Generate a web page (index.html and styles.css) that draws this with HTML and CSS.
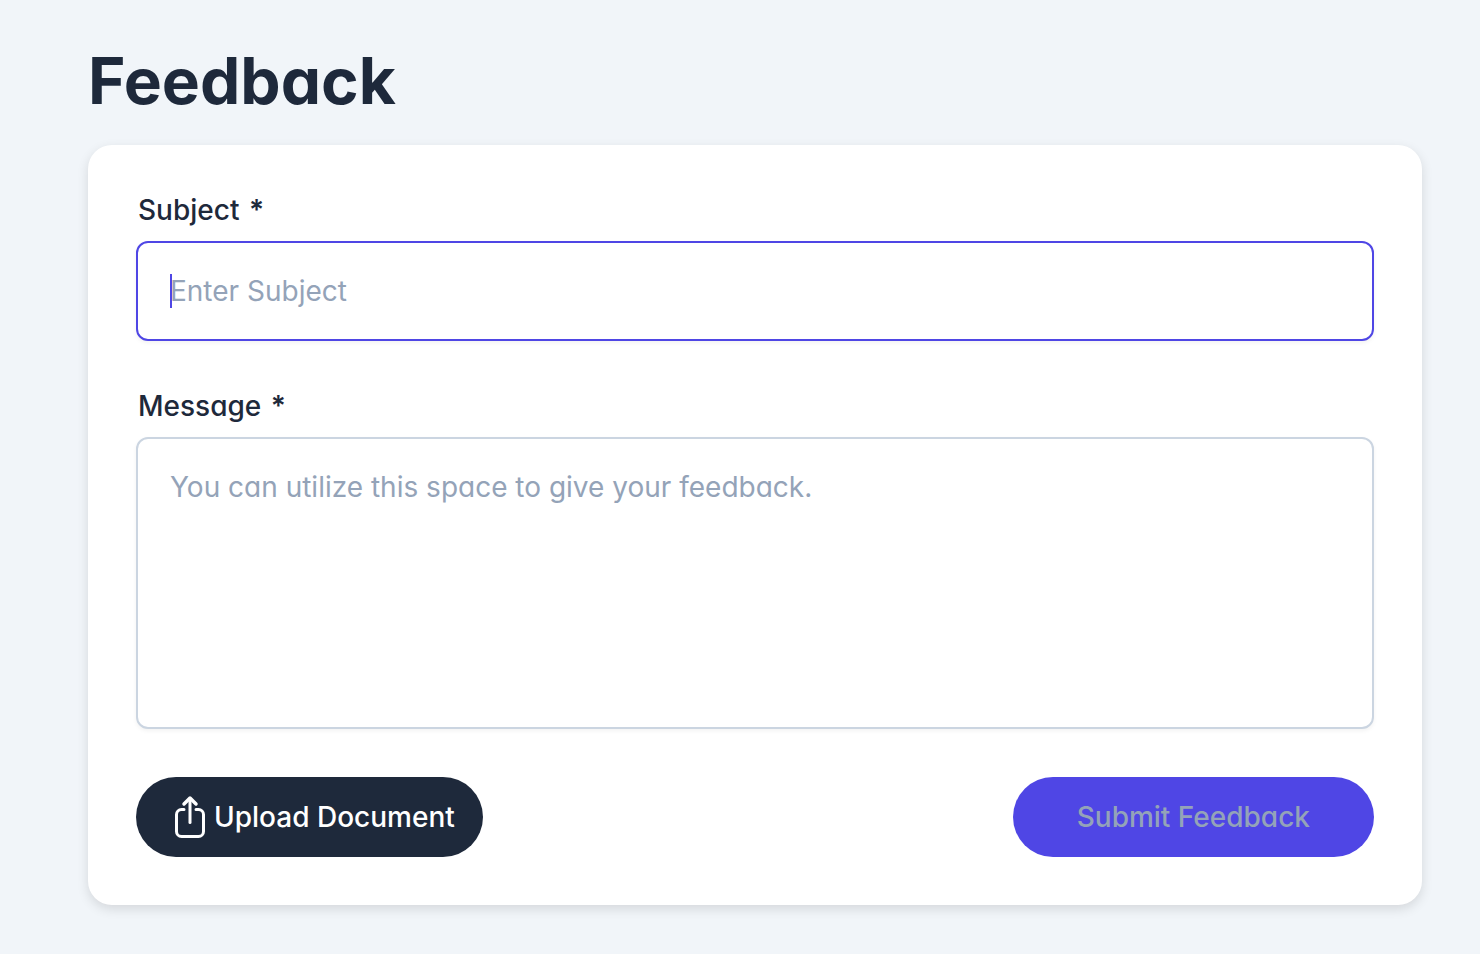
FILE: index.html
```html
<!DOCTYPE html>
<html lang="en">
<head>
<meta charset="utf-8">
<meta name="viewport" content="width=device-width, initial-scale=1">
<title>Feedback</title>
<link rel="stylesheet" href="styles.css">
</head>
<body>
<main class="page">
  <h1 class="title">Feedback</h1>
  <form class="card">
    <div class="field">
      <label class="label" for="subject">Subject <span class="required">*</span></label>
      <div class="control">
        <input class="input input-active" id="subject" type="text" placeholder="Enter Subject">
        <span class="caret" aria-hidden="true"></span>
      </div>
    </div>
    <div class="field">
      <label class="label" for="message">Message <span class="required">*</span></label>
      <textarea class="input message" id="message" placeholder="You can utilize this space to give your feedback."></textarea>
    </div>
    <div class="actions">
      <button class="button upload" type="button">
        <svg class="icon" viewBox="0 0 32 44" fill="none" stroke="currentColor" stroke-width="3" stroke-linecap="round" stroke-linejoin="round" aria-hidden="true">
          <path d="M10 14.500H7.500A5 5 0 0 0 2.500 19.500V36.500A5 5 0 0 0 7.500 41.500H24.500A5 5 0 0 0 29.500 36.500V19.500A5 5 0 0 0 24.500 14.500H22"/>
          <path d="M10 9L16 3L22 9" stroke-width="3.500"/>
          <path d="M16 4V27.500" stroke-width="3"/>
        </svg>
        <span>Upload Document</span>
      </button>
      <button class="button submit" type="submit" disabled>Submit Feedback</button>
    </div>
  </form>
</main>
</body>
</html>
```
FILE: styles.css
```css
* { box-sizing: border-box; }

body {
  margin: 0;
  min-height: 100vh;
  background: #f1f5f9;
  color: #1e293b;
  font-family: Inter, "Noto Sans", sans-serif;
  font-feature-settings: "cv11";
}

.page { padding: 48px 58px 48px 88px; }

.title {
  margin: 0 0 32px;
  font-size: 64px;
  line-height: 65px;
  font-weight: 700;
}

.card {
  display: flex;
  flex-direction: column;
  gap: 48px;
  padding: 48px;
  border-radius: 24px;
  background: #fff;
  box-shadow: 0 4px 12px rgb(0 0 0 / 12%);
}

.field { display: flex; flex-direction: column; gap: 14px; }

.label {
  padding-left: 2px;
  font-size: 28px;
  line-height: 34px;
  font-weight: 500;
}

.required { margin-left: 2px; font-weight: 600; }

.control { position: relative; }

.input {
  display: block;
  width: 100%;
  height: 100px;
  padding: 28px 32px;
  border: 2px solid #cbd5e1;
  border-radius: 12px;
  outline: none;
  background: #fff;
  color: #1e293b;
  font: 400 28px/40px Inter, "Noto Sans", sans-serif;
  font-feature-settings: "cv11";
  box-shadow: 0 2px 4px rgb(0 0 0 / 5%);
}

.input::placeholder { color: #94a3b8; opacity: 1; }

.input-active { border-color: #4f46e5; }

.message {
  height: 292px;
  resize: none;
}

.caret {
  position: absolute;
  top: 33px;
  left: 34px;
  width: 2px;
  height: 34px;
  background: #4f46e5;
}

.actions { display: flex; justify-content: space-between; }

.button {
  display: flex;
  align-items: center;
  justify-content: center;
  height: 80px;
  border: 0;
  border-radius: 40px;
  font: 500 28px/40px Inter, "Noto Sans", sans-serif;
}

.upload {
  gap: 8px;
  padding: 0 28px 0 38px;
  background: #1e293b;
  color: #fff;
  font-feature-settings: normal;
}
.icon { width: 32px; height: 44px; }
.submit {
  padding: 0 64px;
  background: #4f46e5;
  color: #94a3b8;
  font-feature-settings: "cv11";
}
```
